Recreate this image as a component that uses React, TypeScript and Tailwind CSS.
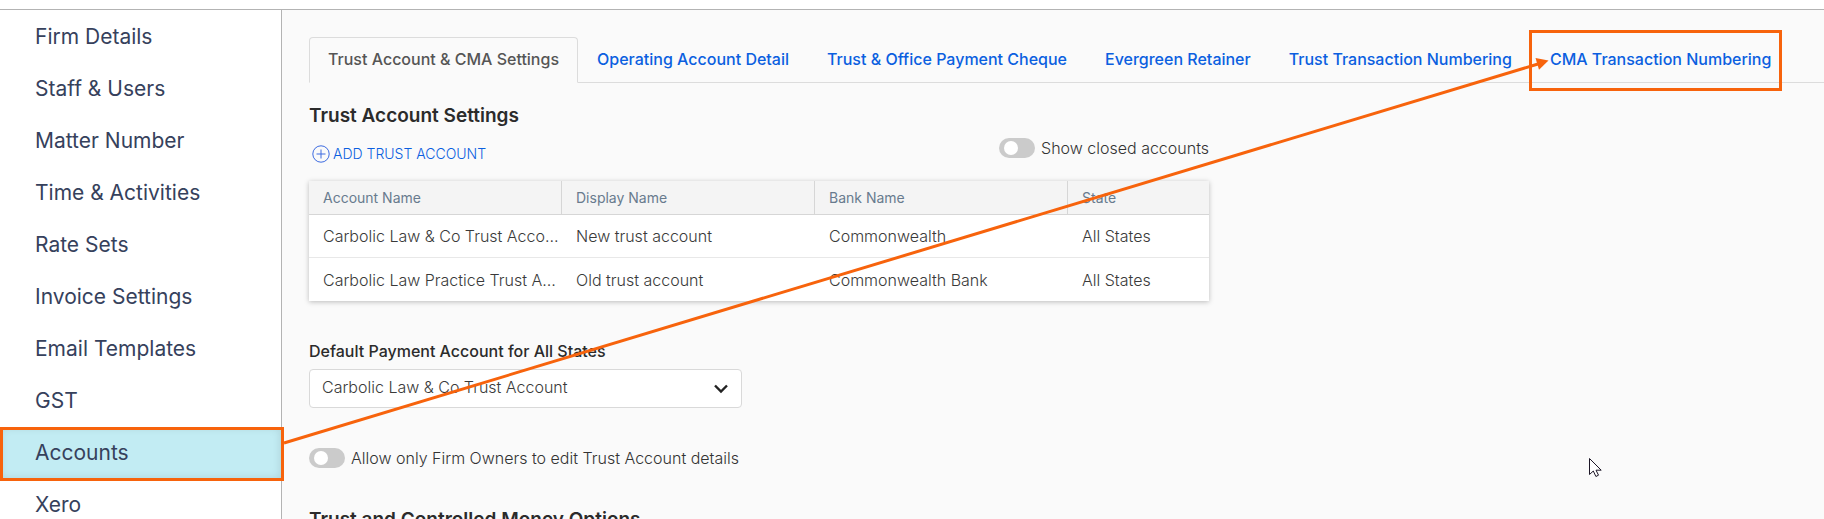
const menuItems = [
  "Firm Details",
  "Staff & Users",
  "Matter Number",
  "Time & Activities",
  "Rate Sets",
  "Invoice Settings",
  "Email Templates",
  "GST",
  "Accounts",
  "Xero",
];

const tabs = [
  "Trust Account & CMA Settings",
  "Operating Account Detail",
  "Trust & Office Payment Cheque",
  "Evergreen Retainer",
  "Trust Transaction Numbering",
  "CMA Transaction Numbering",
];

const columns = ["Account Name", "Display Name", "Bank Name", "State"];

const accounts = [
  {
    name: "Carbolic Law & Co Trust Account",
    display: "New trust account",
    bank: "Commonwealth",
    state: "All States",
  },
  {
    name: "Carbolic Law Practice Trust Account",
    display: "Old trust account",
    bank: "Commonwealth Bank",
    state: "All States",
  },
];

export default function App() {
  return (
    <div className="relative flex h-screen flex-col overflow-hidden bg-white pt-[9px] font-['Inter','Liberation_Sans',sans-serif]">
      <div className="flex min-h-0 flex-1 border-t border-[#b3b3b3]">
        <Sidebar active="Accounts" />
        <main className="min-w-0 flex-1 bg-[#fafafa] pl-[27px] pt-[27px]">
          <TabBar active={tabs[0]} />

          <div className="max-w-[900px]">
            <h2 className="mt-[21px] text-[19px] leading-6 font-semibold text-[#2b2b2b]">Trust Account Settings</h2>
            <div className="mt-2 flex items-start justify-between">
              <button type="button" className="mt-2 ml-[3px] flex items-center gap-[3px] text-sm leading-5 font-light text-[#0b5fe0]">
                <svg className="h-[18px] w-[18px]" viewBox="0 0 18 18" fill="none" stroke="#3d6be0">
                  <circle cx="9" cy="9" r="8.2" />
                  <path d="M4.5 9h9M9 4.5v9" />
                </svg>
                ADD TRUST ACCOUNT
              </button>
              <div className="mt-0.5">
                <Toggle label="Show closed accounts" />
              </div>
            </div>
            <AccountsTable />
          </div>

          <div className="mt-10 max-w-[433px]">
            <label htmlFor="default-account" className="block text-base leading-5 font-medium text-[#2b2b2b]">
              Default Payment Account for All States
            </label>
            <div className="relative mt-2">
              <select
                id="default-account"
                className="h-[39px] w-full appearance-none rounded border border-[#d9d9d9] bg-white pr-10 pb-1 pl-3 text-base font-light text-[#3a3a3a]"
              >
                <option>Carbolic Law &amp; Co Trust Account</option>
                <option>Carbolic Law Practice Trust Account</option>
              </select>
              <svg
                className="pointer-events-none absolute top-[15px] right-[14px] h-[10px] w-[14px]"
                viewBox="0 0 14 10"
                fill="none"
                stroke="#222"
                strokeWidth="2.4"
              >
                <path d="M1 1.5l6 6 6-6" />
              </svg>
            </div>
          </div>

          <div className="mt-10 flex">
            <Toggle label="Allow only Firm Owners to edit Trust Account details" />
          </div>

          <h2 className="mt-10 text-[19px] leading-6 font-semibold text-[#2b2b2b]">Trust and Controlled Money Options</h2>
        </main>
      </div>
      <Annotations />
    </div>
  );
}

function Sidebar({ active }: { active: string }) {
  return (
    <nav className="w-[282px] shrink-0 overflow-hidden border-r border-[#b3b3b3] bg-white pt-px">
      {menuItems.map((item) => (
        <a
          key={item}
          href="#"
          className={`flex h-[52px] items-center pl-[35px] text-[21px] text-[#36415c] ${
            item === active ? "bg-[#c2ecf3] shadow-[inset_0_0_10px_rgba(0,0,0,0.12)]" : ""
          }`}
        >
          {item}
        </a>
      ))}
    </nav>
  );
}

function TabBar({ active }: { active: string }) {
  return (
    <div role="tablist" className="flex border-b border-[#dcdcdc]">
      {tabs.map((tab) => (
        <button
          key={tab}
          type="button"
          role="tab"
          aria-selected={tab === active}
          className={`-mb-px h-[46px] rounded-t border px-[18px] pb-0.5 text-base font-medium whitespace-nowrap ${
            tab === active
              ? "border-[#dcdcdc] border-b-[#fafafa] bg-[#fafafa] text-[#555]"
              : "border-transparent text-[#0b5fe0]"
          }`}
        >
          {tab}
        </button>
      ))}
    </div>
  );
}

function Toggle({ label }: { label: string }) {
  return (
    <label className="flex items-center gap-[6px] text-base leading-5 font-light text-[#333]">
      <input
        type="checkbox"
        role="switch"
        className="h-5 w-9 appearance-none rounded-full bg-[#cbcbcb] before:mt-[3px] before:ml-[5px] before:block before:h-[14px] before:w-[14px] before:rounded-full before:bg-white checked:bg-[#0b5fe0] checked:before:ml-[17px]"
      />
      {label}
    </label>
  );
}

function AccountsTable() {
  return (
    <table className="mt-[17px] w-full table-fixed border-separate border-spacing-0 bg-white text-left shadow-[0_1px_5px_rgba(0,0,0,0.25)]">
      <colgroup>
        <col className="w-[253px]" />
        <col className="w-[253px]" />
        <col className="w-[253px]" />
        <col />
      </colgroup>
      <thead>
        <tr className="bg-[#f4f4f4] text-sm text-[#687b8e]">
          {columns.map((column) => (
            <th
              key={column}
              className="h-[34px] border-r border-b border-[#d6d6d6] pl-[14px] font-normal last:border-r-0"
            >
              {column}
            </th>
          ))}
        </tr>
      </thead>
      <tbody className="text-base font-light text-[#3a3a3a]">
        {accounts.map((account) => (
          <tr key={account.name} className="group">
            {[account.name, account.display, account.bank, account.state].map((value, i) => (
              <td
                key={i}
                className="h-[43px] truncate border-b border-[#e8e8e8] pl-[14px] group-last:border-b-0"
              >
                {value}
              </td>
            ))}
          </tr>
        ))}
      </tbody>
    </table>
  );
}

// Walkthrough markup drawn over the page: highlight boxes, arrow and pointer
function Annotations() {
  return (
    <svg className="pointer-events-none absolute top-0 left-0" width="1824" height="519" viewBox="0 0 1824 519" fill="none">
      <g stroke="#f7630c" strokeWidth="3">
        <rect x="1.5" y="428.5" width="281" height="51" />
        <rect x="1530.5" y="31.5" width="250" height="58" />
        <path d="M284 443L1538 64" />
      </g>
      <path d="M1548.5 60.5L1535.5 58L1539 69.8z" fill="#f7630c" />
      <path
        d="M1589.5 458.5v16l3.8-3.5 2.6 5.5 2.6-1.3-2.5-5h5.2z"
        fill="#fff"
        stroke="#1c1626"
      />
    </svg>
  );
}
